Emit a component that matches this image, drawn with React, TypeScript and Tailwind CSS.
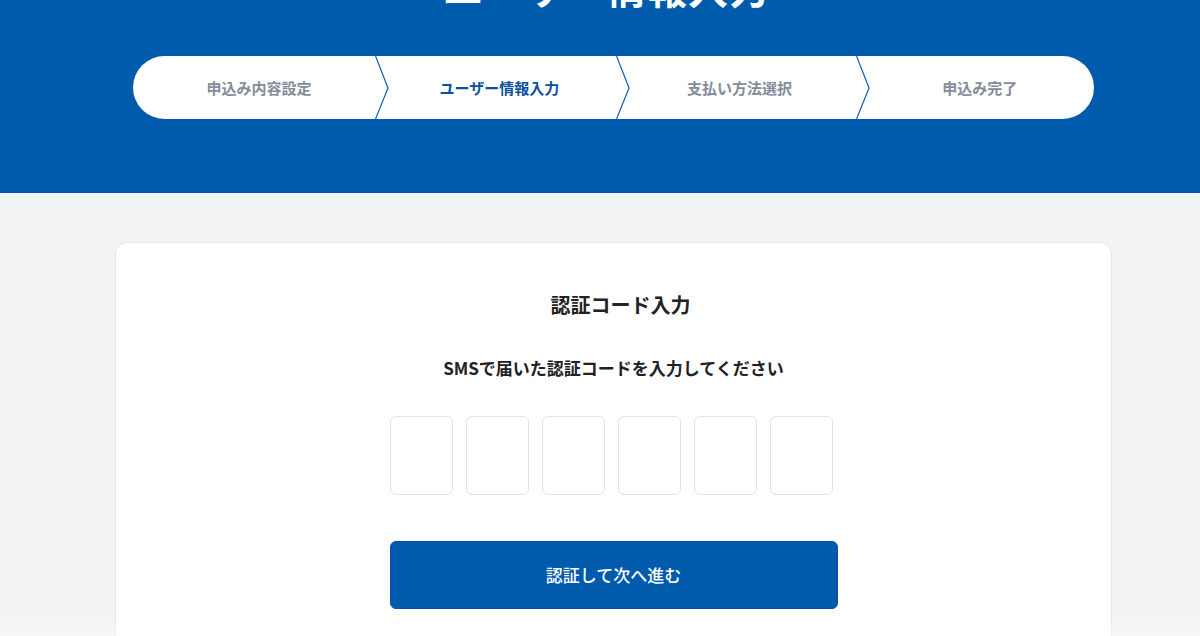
const steps = ['申込み内容設定', 'ユーザー情報入力', '支払い方法選択', '申込み完了'];
const activeStep = 1;

function Chevron() {
  return (
    <svg
      className="absolute top-0 left-[calc(100%+2px)] h-full w-[14px]"
      viewBox="0 0 14 63"
      preserveAspectRatio="none"
    >
      <polyline points="0.5,0 13,32 0.5,63" fill="none" stroke="#0b5cad" strokeWidth="1.2" />
    </svg>
  );
}

export default function App() {
  return (
    <div
      className="relative h-[636px] overflow-hidden bg-[#f2f3f5]"
      style={{ fontFamily: '"Noto Sans CJK JP", "Noto Sans", sans-serif' }}
    >
      {/* Header */}
      <header className="h-[193px] overflow-hidden border-b border-[#0a4ea8] bg-[#005bac]">
        <h1 className="-mt-[33px] ml-[13px] text-center text-[40px] font-bold leading-none tracking-[1px] text-white">
          ユーザー情報入力
        </h1>

        {/* Steps */}
        <div className="ml-[133px] mt-[49px] flex h-[63px] w-[961px] rounded-full bg-white">
          {steps.map((label, i) => (
            <div key={label} className="relative flex flex-1 items-center justify-center pl-[12px] pt-[2px]">
              <span
                className={
                  i === activeStep
                    ? 'text-[15px] font-bold text-[#0d4f9e]'
                    : 'text-[15px] font-bold text-[#858b99]'
                }
              >
                {label}
              </span>
              {i < steps.length - 1 && <Chevron />}
            </div>
          ))}
        </div>
      </header>

      {/* Card */}
      <main className="pt-[49px]">
        <div className="ml-[115px] w-[997px] rounded-[12px] border border-[#e4e6ea] bg-white pb-[40px] pt-[47px]">
          <h2 className="pl-[14px] text-center text-[20px] font-bold leading-[30px] text-[#222]">認証コード入力</h2>
          <p className="mt-[35px] text-center text-[17px] font-bold leading-[26px] text-[#222]">
            SMSで届いた認証コードを入力してください
          </p>

          <div className="mx-auto mt-[35px] flex w-[448px] gap-[13px]">
            {[0, 1, 2, 3, 4, 5].map((n) => (
              <input
                key={n}
                type="text"
                maxLength={1}
                className="h-[79px] w-[63px] rounded-[6px] border border-[#e3e3e3] bg-white text-center text-[28px] outline-none"
              />
            ))}
          </div>

          <button className="mx-auto mt-[46px] block h-[68px] w-[448px] rounded-[6px] border border-[#0a4ea8] bg-[#005bac] text-[17px] font-medium text-white">
            認証して次へ進む
          </button>
        </div>
      </main>

      {/* bottom fade */}
      <div className="pointer-events-none absolute bottom-0 left-0 h-[20px] w-full bg-gradient-to-b from-transparent to-white/40" />
    </div>
  );
}
